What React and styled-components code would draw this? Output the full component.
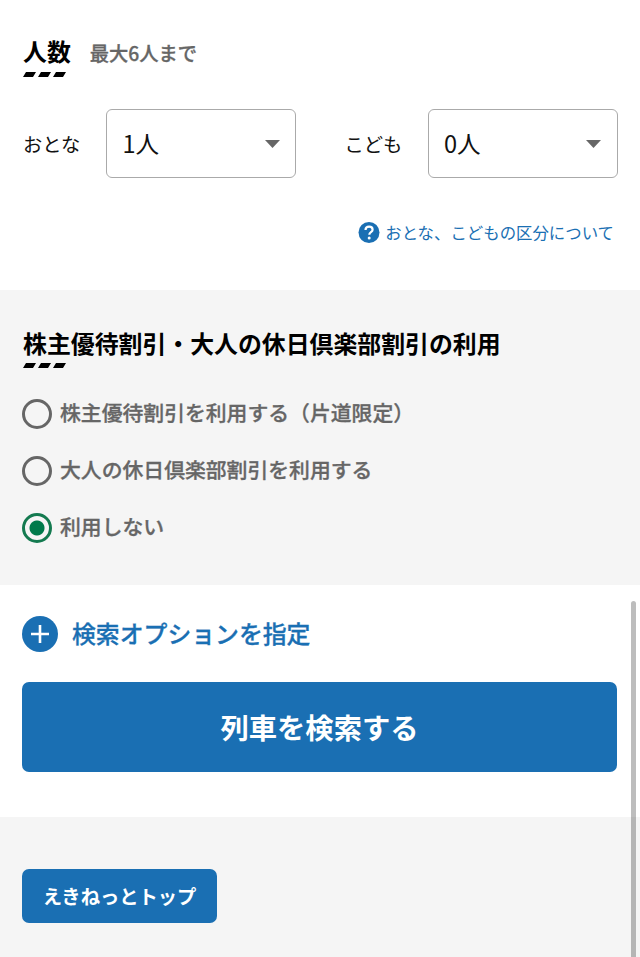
import React, {useState} from "react";
import styled, {createGlobalStyle} from "styled-components";

const GlobalStyle = createGlobalStyle`
    * {
        box-sizing: border-box;
    }

    body {
        margin: 0;
        background-color: #fff;
        color: #000;
        font-family: "Noto Sans CJK JP", sans-serif;
    }

    button {
        font-family: inherit;
    }
`;

const Page = styled.main`
    position: relative;
    width: 640px;
    height: 957px;
    overflow: hidden;
`;

const Section = styled.section`
    height: ${(props) => props.$height}px;
    padding: ${(props) => props.$top}px 22px 0;
    background-color: ${(props) => (props.$gray ? "#f5f5f5" : "#fff")};
`;

const TitleRow = styled.div`
    display: flex;
    gap: 19px;
`;

const TitleBlock = styled.div`
    display: flex;
    flex-direction: column;
    gap: ${(props) => props.$gap}px;
    padding-left: 1px;
`;

const Title = styled.h2`
    margin: 0;
    font-size: 23.88px;
    line-height: 32px;
    font-weight: 700;
    white-space: nowrap;
`;

const TitleLine = styled.svg`
    display: block;
    width: 44px;
    height: 5px;
`;

const TitleNote = styled.span`
    color: #666;
    font-size: 19.3px;
    line-height: 37px;
    font-weight: 500;
    -webkit-text-stroke: 0.3px #666;
`;

const PeopleRow = styled.div`
    display: flex;
    justify-content: space-between;
    margin-top: 32px;
    padding-right: 0.5px;
`;

const Field = styled.label`
    display: flex;
    align-items: center;
    justify-content: space-between;
    width: ${(props) => props.$width}px;
`;

const FieldName = styled.span`
    padding-left: 1px;
    color: #111;
    font-size: 19.3px;
`;

const SelectBox = styled.button`
    display: flex;
    align-items: center;
    justify-content: space-between;
    width: 190px;
    height: 69px;
    padding: 0 15.5px 0 15.5px;
    border: 1.5px solid #aaa;
    border-radius: 6px;
    background-color: #fff;
    color: #111;
    font-size: 23.6px;
`;

const SelectValue = styled.span`
    padding-bottom: 2px;
`;

const HelpLink = styled.a`
    display: flex;
    align-items: center;
    justify-content: flex-end;
    gap: 5px;
    margin-top: 42px;
    padding-right: 4px;
    color: #1a6fb3;
    font-size: 16.42px;
    line-height: 24px;
`;

const HelpIcon = styled.svg`
    width: 22px;
    height: 22px;
`;

const RadioList = styled.div`
    display: flex;
    flex-direction: column;
    gap: 27px;
    margin-top: 31px;
`;

const RadioLabel = styled.label`
    display: flex;
    align-items: center;
    gap: 8px;
    height: 30px;
    color: #666;
    font-size: 20.83px;
    font-weight: 500;
    -webkit-text-stroke: 0.3px #666;
`;

const RadioText = styled.span`
    line-height: 28px;
    padding-bottom: 5px;
`;

const RadioMark = styled.input`
    appearance: none;
    width: 30px;
    height: 30px;
    margin: 0;
    border: 3px solid #666;
    border-radius: 50%;

    &:checked {
        border-color: #147a50;
        background: radial-gradient(circle, #007a4b 7px, transparent 8px);
    }
`;

const OptionLink = styled.a`
    display: flex;
    align-items: center;
    gap: 14px;
    height: 36px;
    color: #1a6fb3;
    font-size: 23.85px;
    font-weight: 500;
    -webkit-text-stroke: 0.3px #1a6fb3;
`;

const OptionText = styled.span`
    padding-bottom: 3px;
`;

const PlusIcon = styled.svg`
    width: 36px;
    height: 36px;
`;

const SearchButton = styled.button`
    display: block;
    width: 595px;
    height: 90px;
    margin-top: 30px;
    padding: 0 0 2px;
    border: none;
    border-radius: 7px;
    background-color: #1a6fb3;
    color: #fff;
    font-size: 28.3px;
    font-weight: 700;
`;

const TopButton = styled.button`
    width: 195px;
    height: 54px;
    padding: 0;
    border: none;
    border-radius: 7px;
    background-color: #1a6fb3;
    color: #fff;
    font-size: 19.3px;
    font-weight: 700;
`;

const ScrollThumb = styled.div`
    position: absolute;
    top: 601px;
    right: 4px;
    bottom: 0;
    width: 5px;
    border-radius: 3px 3px 0 0;
    background-color: rgba(0, 0, 0, 0.26);
`;

const discounts = [
    "株主優待割引を利用する（片道限定）",
    "大人の休日倶楽部割引を利用する",
    "利用しない",
];

function SectionTitle({children, gap}) {
    return (
        <TitleBlock $gap={gap}>
            <Title>{children}</Title>
            <TitleLine viewBox="0 0 44 5">
                <path d="M3 0h10l-3 5H0zM18 0h10l-3 5H15zM33 0h10l-3 5H30z"/>
            </TitleLine>
        </TitleBlock>
    );
}

function PeopleSelect({name, value, width}) {
    return (
        <Field $width={width}>
            <FieldName>{name}</FieldName>
            <SelectBox type="button">
                <SelectValue>{value}</SelectValue>
                <svg width="15" height="8" viewBox="0 0 15 8">
                    <path d="M0 0h15L7.5 8z" fill="#666"/>
                </svg>
            </SelectBox>
        </Field>
    );
}

function App() {
    const [discount, setDiscount] = useState(2);

    return (
        <Page>
            <GlobalStyle/>
            <Section $height={290} $top={35}>
                <TitleRow>
                    <SectionTitle gap={5}>人数</SectionTitle>
                    <TitleNote>最大6人まで</TitleNote>
                </TitleRow>
                <PeopleRow>
                    <PeopleSelect name="おとな" value="1人" width={274}/>
                    <PeopleSelect name="こども" value="0人" width={274}/>
                </PeopleRow>
                <HelpLink>
                    <HelpIcon viewBox="0 0 22 22">
                        <circle cx="11" cy="11.5" r="10.5" fill="#1a6fb3"/>
                        <path d="M7.5 9.1c0-2.1 1.4-3.4 3.6-3.4s3.5 1.2 3.5 3c0 2.5-3.3 2.5-3.3 5" fill="none" stroke="#fff" strokeWidth="2.2"/>
                        <circle cx="11.2" cy="16.9" r="1.5" fill="#fff"/>
                    </HelpIcon>
                    おとな、こどもの区分について
                </HelpLink>
            </Section>
            <Section $height={295} $top={37} $gray>
                <SectionTitle gap={4}>株主優待割引・大人の休日倶楽部割引の利用</SectionTitle>
                <RadioList>
                    {discounts.map((text, index) => (
                        <RadioLabel key={text}>
                            <RadioMark
                                type="radio"
                                name="discount"
                                checked={discount === index}
                                onChange={() => setDiscount(index)}
                            />
                            <RadioText>{text}</RadioText>
                        </RadioLabel>
                    ))}
                </RadioList>
            </Section>
            <Section $height={232} $top={31}>
                <OptionLink>
                    <PlusIcon viewBox="0 0 36 36">
                        <circle cx="18" cy="18" r="18" fill="#1a6fb3"/>
                        <path d="M9 18h18M18 9v18" stroke="#fff" strokeWidth="2.6"/>
                    </PlusIcon>
                    <OptionText>検索オプションを指定</OptionText>
                </OptionLink>
                <SearchButton type="button">列車を検索する</SearchButton>
            </Section>
            <Section $height={140} $top={52} $gray>
                <TopButton type="button">えきねっとトップ</TopButton>
            </Section>
            <ScrollThumb/>
        </Page>
    );
}

export default App;
